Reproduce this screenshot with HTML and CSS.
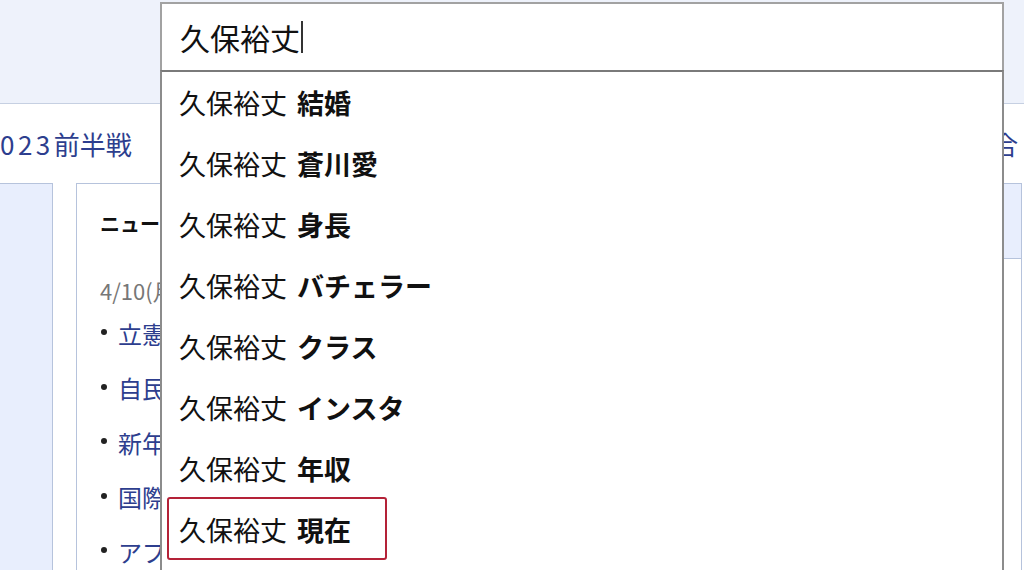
FILE: index.html
```html
<!DOCTYPE html>
<html lang="ja">
<head>
<meta charset="utf-8">
<title>検索候補</title>
<link rel="stylesheet" href="styles.css">
</head>
<body>
<div class="page">
  <header class="header"></header>
  <nav class="nav">
    <a class="nav-link"><span class="num">023</span>前半戦</a>
    <a class="nav-link">試合</a>
  </nav>
  <div class="content">
    <div class="side-box"></div>
    <section class="news">
      <h2 class="news-title">ニュース</h2>
      <p class="news-date">4/10(月) 12:30更新</p>
      <ul class="news-list">
        <li><a>立憲 統一選で議席増</a></li>
        <li><a>自民 道府県議選で過半数</a></li>
        <li><a>新年度 予算の執行へ</a></li>
        <li><a>国際 首脳会談を調整</a></li>
        <li><a>アプリ 新機能を発表</a></li>
      </ul>
    </section>
    <div class="right-col">
      <div class="right-head"></div>
    </div>
  </div>

  <div class="search">
    <div class="search-input">久保裕丈<span class="caret"></span></div>
    <ul class="suggest">
      <li><span class="q">久保裕丈</span><b>結婚</b></li>
      <li><span class="q">久保裕丈</span><b>蒼川愛</b></li>
      <li><span class="q">久保裕丈</span><b>身長</b></li>
      <li><span class="q">久保裕丈</span><b>バチェラー</b></li>
      <li><span class="q">久保裕丈</span><b>クラス</b></li>
      <li><span class="q">久保裕丈</span><b>インスタ</b></li>
      <li><span class="q">久保裕丈</span><b>年収</b></li>
      <li class="marked"><span class="q">久保裕丈</span><b>現在</b></li>
    </ul>
  </div>
</div>
</body>
</html>
```

FILE: styles.css
```css
* { box-sizing: border-box; }
html, body { margin: 0; padding: 0; }
body {
  width: 1024px;
  height: 570px;
  overflow: hidden;
  background: #ffffff;
  font-family: "Noto Sans CJK JP", "Noto Sans", sans-serif;
  color: #111;
}
.page {
  position: relative;
  width: 1024px;
  height: 570px;
  overflow: hidden;
}
.header {
  height: 104px;
  background: #eef2fb;
  border-bottom: 1px solid #c6d0e2;
}
.nav {
  height: 79px;
  display: flex;
  justify-content: space-between;
  align-items: center;
  padding-right: 6px;
  background: #fff;
}
.nav-link {
  font-size: 26px;
  color: #2d3e8e;
  line-height: 1;
}
.num { letter-spacing: 3.5px; }
.content {
  display: flex;
  align-items: flex-start;
  height: 400px;
}
.side-box {
  width: 54px;
  height: 400px;
  margin-left: -1px;
  background: #e8eefd;
  border: 1px solid #b6c3dc;
}
.news {
  flex: 1;
  height: 400px;
  margin-left: 23px;
  border: 1px solid #b6c3dc;
  padding: 25px 0 0 23px;
}
.news-title {
  margin: 0;
  font-size: 20px;
  line-height: 30px;
  font-weight: 700;
}
.news-date {
  margin: 36px 0 0;
  font-size: 22px;
  line-height: 30px;
  color: #777;
}
.news-list {
  list-style: none;
  margin: 1px 0 0;
  padding: 0;
}
.news-list li {
  height: 54.5px;
  display: flex;
  align-items: center;
  font-size: 24px;
  white-space: nowrap;
}
.news-list li::before {
  content: "";
  width: 6px;
  height: 6px;
  border-radius: 50%;
  background: #222;
  margin: 0 11px 2px 1px;
}
.news-list a { color: #2d3e8e; }
.right-col {
  width: 19px;
  height: 400px;
  margin-left: 14px;
  margin-right: 2px;
  border: 1px solid #b6c3dc;
}
.right-head {
  height: 75px;
  background: #e8eefd;
  border-bottom: 1px solid #b6c3dc;
}

.search {
  position: absolute;
  left: 160px;
  top: 2px;
  width: 844px;
  background: #fff;
}
.search-input {
  height: 68px;
  border: 2px solid #a2a2a2;
  border-bottom: none;
  padding-left: 18px;
  display: flex;
  align-items: center;
  font-size: 30px;
  color: #111;
}
.caret {
  display: inline-block;
  width: 2px;
  height: 32px;
  margin-left: 1px;
  background: #333;
}
.suggest {
  list-style: none;
  margin: 0;
  padding: 0;
  border-top: 2px solid #7a7a7a;
  border-left: 2px solid #8c8c8c;
  border-right: 2px solid #8c8c8c;
  height: 520px;
}
.suggest li {
  position: relative;
  height: 61px;
  display: flex;
  align-items: center;
  padding-left: 17px;
  font-size: 27px;
  color: #111;
}
.suggest .q { margin-right: 10px; }
.suggest b { font-weight: 700; }
.suggest li.marked::after {
  content: "";
  position: absolute;
  left: 5px;
  top: -2px;
  width: 216px;
  height: 59px;
  border: 2px solid #b42238;
  border-radius: 3px;
}
```
